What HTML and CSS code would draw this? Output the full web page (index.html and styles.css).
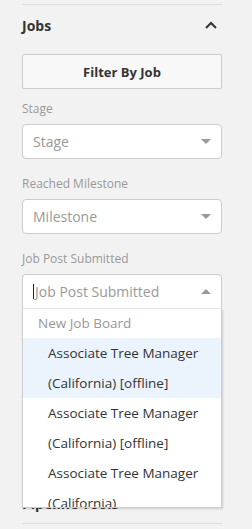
FILE: index.html
```html
<!DOCTYPE html>
<html lang="en">

<head>
    <meta charset="UTF-8">
    <meta name="viewport" content="width=device-width, initial-scale=1.0">
    <title>Filters</title>
    <link rel="stylesheet" href="styles.css">
</head>

<body>
    <div class="sidebar">
        <section class="filterGroup jobsGroup">
            <div class="groupHead">
                <h3>Jobs</h3>
                <svg class="chevron" width="12" height="8" viewBox="0 0 12 8">
                    <polyline points="1,7 6,2 11,7" fill="none" stroke="#333" stroke-width="2" />
                </svg>
            </div>
            <button class="filterBtn">Filter By Job</button>

            <div class="field first">
                <label>Stage</label>
                <div class="select">
                    <span class="placeholder">Stage</span>
                    <i class="arrow"></i>
                </div>
            </div>

            <div class="field">
                <label>Reached Milestone</label>
                <div class="select">
                    <span class="placeholder">Milestone</span>
                    <i class="arrow"></i>
                </div>
            </div>

            <div class="field">
                <label>Job Post Submitted</label>
                <div class="selectWrap">
                    <div class="select isOpen">
                        <span class="caret"></span>
                        <span class="placeholder">Job Post Submitted</span>
                        <i class="arrow up"></i>
                    </div>
                    <ul class="dropdown">
                        <li class="groupLabel">New Job Board</li>
                        <li class="option active">Associate Tree Manager (California) [offline]</li>
                        <li class="option">Associate Tree Manager (California) [offline]</li>
                        <li class="option">Associate Tree Manager (California)</li>
                    </ul>
                </div>
            </div>
        </section>

        <section class="filterGroup">
            <div class="groupHead">
                <h3>Pipeline Tools</h3>
            </div>
        </section>
    </div>
</body>

</html>
```

FILE: styles.css
```css
body {
    margin: 0;
    padding: 0;
    background-color: #f2f2f2;
    font-family: "Open Sans", sans-serif;
    color: #333;
    overflow: hidden;
}

.sidebar {
    width: 200px;
    margin-left: 22px;
    padding-top: 4px;
}

.filterGroup {
    border-top: 1px solid #dddddd;
}

.filterGroup:last-child {
    border-bottom: 1px solid #dddddd;
}

.jobsGroup {
    padding-bottom: 173px;
}

.groupHead {
    height: 40px;
    display: flex;
    align-items: center;
    justify-content: space-between;
}

.groupHead h3 {
    margin: 0;
    font-size: 14px;
    font-weight: bold;
    color: #333;
}

.chevron {
    margin-right: 5px;
    margin-top: -1px;
}

.filterBtn {
    display: block;
    width: 100%;
    height: 35px;
    margin-top: 9px;
    padding: 0;
    background-color: #f8f8f8;
    border: 1px solid #cccccc;
    border-radius: 2px;
    font-family: "Open Sans", sans-serif;
    font-size: 13px;
    font-weight: bold;
    color: #333;
}

.field {
    margin-top: 16px;
}

.field.first {
    margin-top: 11px;
}

.field label {
    display: block;
    font-size: 12px;
    line-height: 17px;
    color: #999;
    margin-bottom: 7px;
}

.select {
    height: 35px;
    box-sizing: border-box;
    display: flex;
    align-items: center;
    padding: 0 10px;
    background-color: #fff;
    border: 1px solid #cccccc;
    border-radius: 4px;
    font-size: 14px;
}

.placeholder {
    flex: 1;
    color: #999;
}

.arrow {
    width: 0;
    height: 0;
    border-left: 5px solid transparent;
    border-right: 5px solid transparent;
    border-top: 5px solid #999;
}

.arrow.up {
    border-top: none;
    border-bottom: 5px solid #999;
}

.selectWrap {
    position: relative;
}

.select.isOpen {
    border-radius: 4px 4px 0 0;
    border-bottom-color: #e6e6e6;
}

.caret {
    width: 1px;
    height: 15px;
    background-color: #222;
    margin-right: 1px;
}

.dropdown {
    position: absolute;
    top: 100%;
    left: 0;
    right: 0;
    height: 198px;
    margin: 0;
    padding: 0;
    list-style: none;
    overflow: hidden;
    background-color: #fff;
    border: 1px solid #cccccc;
    border-top: none;
    box-shadow: 1px 1px 2px rgba(0, 0, 0, 0.15);
    z-index: 2;
}

.groupLabel {
    height: 29px;
    line-height: 29px;
    padding-left: 15px;
    font-size: 13.5px;
    color: #999;
}

.option {
    padding: 0 12px 0 25px;
    font-size: 13.5px;
    line-height: 30px;
    color: #333;
}

.option.active {
    background-color: #ebf3fd;
}
```
